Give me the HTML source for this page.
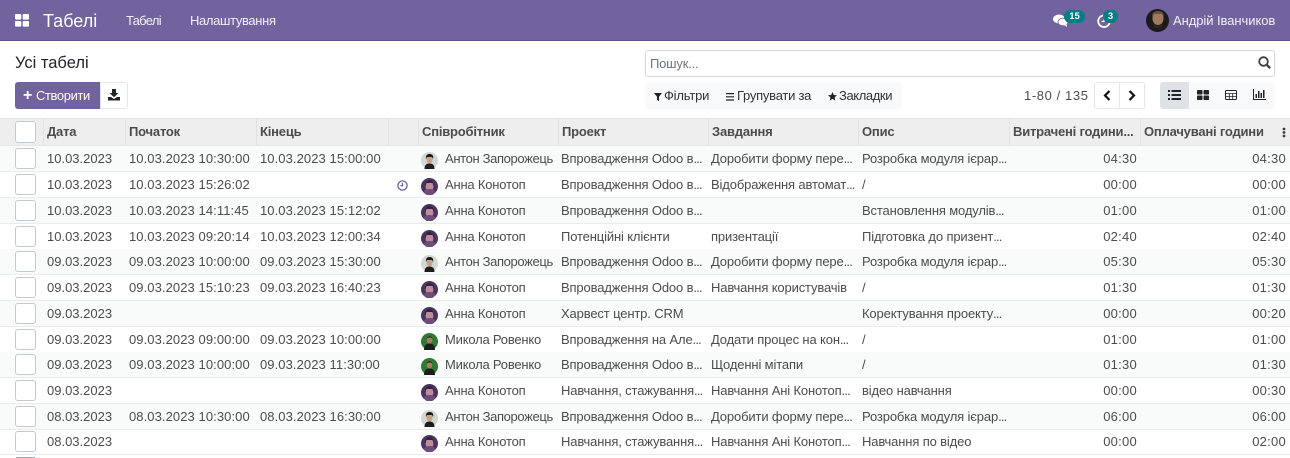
<!DOCTYPE html>
<html lang="uk"><head><meta charset="utf-8"><title>Табелі</title>
<style>
html,body{margin:0;padding:0;background:#fff}
html{width:1290px;height:458px;overflow:hidden}
body{width:1290px;height:458px;position:relative;overflow:hidden;font-family:"Liberation Sans",sans-serif;font-size:13px;color:#4c4c4c}
.a{position:absolute;white-space:nowrap}
#nav{position:absolute;left:0;top:0;width:1290px;height:40px;background:#71639e;border-bottom:1.5px solid #5f5389;color:#fff}
.btn{position:absolute;box-sizing:border-box;border:1px solid #e4e7ea;background:#fff}
.th{position:absolute;top:119px;height:26px;box-sizing:border-box;line-height:26px;font-weight:bold;color:#4c4c4c;white-space:nowrap;padding-left:3px;border-left:1px solid #e2e2e2;letter-spacing:-.2px}
.r{position:absolute;left:0;width:1290px;height:26px;box-sizing:border-box;border-bottom:1px solid #e9ecef;line-height:25px}
.r.s{background:#f9fafa}
.r span{position:absolute;top:0;white-space:nowrap}
.r i{position:absolute;left:15px;top:2px;width:21px;height:21px;box-sizing:border-box;border:1px solid #c4c9ce;border-radius:3px;background:#fff}
.r svg{position:absolute;left:421px;top:6px}
.r u{text-decoration:none;letter-spacing:-.8px}
.d{left:47px}
.r .b{left:129px;letter-spacing:.08px}
.r .e{left:260px;letter-spacing:.08px}
.r .n{left:445px;letter-spacing:-.2px}
.r .z{letter-spacing:-.35px}
.r .p{left:561px;letter-spacing:-.14px}
.r .t{left:711px;letter-spacing:-.14px}
.r .o{left:862px;letter-spacing:-.14px}
.r .h1{right:153px;letter-spacing:.25px}
.r .h2{right:4px;letter-spacing:.25px}
</style></head><body>
<svg width="0" height="0" style="position:absolute">
<symbol id="an" viewBox="0 0 17 17"><circle cx="8.5" cy="8.5" r="8.5" fill="#4a3560"/><ellipse cx="8.5" cy="8" rx="4" ry="5.5" fill="#c08c9c"/><path d="M2.500 14c1-2 3-3 6-3s5 1 6 3l-3 3H5.500z" fill="#6d4e78"/><path d="M4 10C3.500 4 6 2 8.500 2S13.500 4 13 10L11.500 5H5.500z" fill="#33243f"/></symbol>
<symbol id="ant" viewBox="0 0 17 17"><circle cx="8.500" cy="8.500" r="8.500" fill="#d4d6d3"/><ellipse cx="8.500" cy="7.500" rx="3" ry="4" fill="#c9a28c"/><path d="M5 7C4.500 3 6.500 2 8.500 2s4.500 1 3.500 5L11 5H6z" fill="#1e1a19"/><path d="M3.500 17c0-4 2-5.500 5-5.500s5 1.500 5 5.500z" fill="#1d1d1f"/></symbol>
<symbol id="mk" viewBox="0 0 17 17"><circle cx="8.500" cy="8.500" r="8.500" fill="#2f7a35"/><ellipse cx="8.500" cy="7" rx="2.800" ry="3.500" fill="#a97f62"/><path d="M5.500 6C6 2.500 11 2.500 11.500 6L10 4.500H7z" fill="#1d1c14"/><path d="M3 17c0-5 2.500-6.500 5.500-6.500S14 12 14 17z" fill="#1a1f1a"/></symbol>
</svg>
<div id="nav">
<svg class="a" style="left:15px;top:14px" width="14" height="13"><rect width="6.300" height="5.600" rx="1" fill="#fff"/><rect x="7.700" width="6.300" height="5.600" rx="1" fill="#fff"/><rect y="7" width="6.300" height="5.600" rx="1" fill="#fff"/><rect x="7.700" y="7" width="6.300" height="5.600" rx="1" fill="#fff"/></svg>
<div class="a" style="left:43px;top:10px;font-size:18px;line-height:22px">Табелі</div>
<div class="a" style="left:126px;top:13px;line-height:16px;color:#f2f0f6;letter-spacing:-.7px">Табелі</div>
<div class="a" style="left:190px;top:13px;line-height:16px;color:#f2f0f6;letter-spacing:-.35px">Налаштування</div>
<svg class="a" style="left:1053px;top:13px" width="16" height="15"><ellipse cx="6" cy="6" rx="6" ry="4.500" fill="#fff"/><ellipse cx="10" cy="9" rx="5" ry="3.800" fill="#fff" stroke="#71639e" stroke-width=".8"/><path d="M11 12l3 2-.5-3z" fill="#fff"/></svg>
<div class="a" style="left:1064px;top:10px;width:21px;height:13px;border-radius:7px;background:#017e84;color:#fff;font-size:9.500px;font-weight:bold;line-height:13px;text-align:center">15</div>
<svg class="a" style="left:1097px;top:14px" width="14" height="14" fill="none" stroke="#fff" stroke-width="1.800"><path d="M9.500 2A5.800 5.800 0 1 0 12.800 7"/><path d="M7 4v3.500H4.500" stroke-width="1.300"/></svg>
<div class="a" style="left:1103px;top:10px;width:15px;height:13px;border-radius:7px;background:#017e84;color:#fff;font-size:9.500px;font-weight:bold;line-height:13px;text-align:center">3</div>
<svg class="a" style="left:1146px;top:9px" width="23" height="23"><circle cx="11.500" cy="11.500" r="11.500" fill="#1c1a1d"/><ellipse cx="12" cy="9.500" rx="5.500" ry="6.500" fill="#a07a5f"/><path d="M6 8c0-5 3-6 6-6s6 1 6 6l-2-3H8z" fill="#6a5040"/><path d="M7 13c2 5 8 5 10 0l-1 6H8z" fill="#2e2522"/></svg>
<div class="a" style="left:1173px;top:13px;line-height:16px;color:#f2f0f6;letter-spacing:-.06px">Андрій Іванчиков</div>
</div>

<div class="a" style="left:15px;top:53px;font-size:16.500px;line-height:20px;color:#212529">Усі табелі</div>
<div class="a" style="left:645px;top:50px;width:630px;height:27px;box-sizing:border-box;border:1px solid #d5d9dd;border-radius:3px"></div>
<div class="a" style="left:650px;top:56px;line-height:16px;color:#6f757a;letter-spacing:-.2px">Пошук...</div>
<svg class="a" style="left:1258px;top:56px" width="13" height="13" fill="none" stroke="#3c4043" stroke-width="1.800"><circle cx="5.500" cy="5.500" r="4.300"/><path d="M8.700 8.700l3.500 3.500" stroke-width="2.200"/></svg>

<div class="a" style="left:15px;top:82px;width:85px;height:27px;background:#71639e;border-radius:3px 0 0 3px;color:#fff;line-height:27px"><span class="a" style="left:8px;font-weight:bold;font-size:16px">+</span><span class="a" style="left:21px;letter-spacing:-.4px">Створити</span></div>
<div class="btn" style="left:100px;top:82px;width:28px;height:27px;border-radius:0 3px 3px 0"></div>
<svg class="a" style="left:108px;top:89px" width="12" height="12" fill="#212529"><path d="M4 0h4v4h2.500L6 8.300 1.500 4H4z"/><path d="M0 8h3l3 2 3-2h3v3.500H0z"/></svg>

<div class="a" style="left:645px;top:82px;width:257px;height:27px;background:#f8f9fa;border-radius:3px"></div>
<svg class="a" style="left:654px;top:93px" width="8" height="8" fill="#212529"><path d="M0 0h8L5 3.800V8L3 7V3.800z"/></svg>
<div class="a" style="left:664px;top:87px;line-height:17px;color:#2f3338;letter-spacing:-.2px">Фільтри</div>
<svg class="a" style="left:726px;top:93px" width="8" height="8" fill="#212529"><path d="M0 0h8v1.200H0zM0 3.200h8v1.200H0zM0 6.400h8v1.200H0z"/></svg>
<div class="a" style="left:737px;top:87px;line-height:17px;color:#2f3338;letter-spacing:-.25px">Групувати за</div>
<svg class="a" style="left:828px;top:92px" width="9" height="9" fill="#212529"><path d="M4.500 0l1.300 3 3.200.300-2.400 2.100.7 3.200-2.800-1.700-2.800 1.700.7-3.200L0 3.300 3.200 3z"/></svg>
<div class="a" style="left:839px;top:87px;line-height:17px;color:#2f3338;letter-spacing:-.4px">Закладки</div>

<div class="a" style="left:1024px;top:87px;line-height:17px;letter-spacing:.6px;color:#4c4c4c">1-80 / 135</div>
<div class="btn" style="left:1094px;top:82px;width:26px;height:27px;border-radius:3px 0 0 3px"></div>
<div class="btn" style="left:1119px;top:82px;width:26px;height:27px;border-radius:0 3px 3px 0"></div>
<svg class="a" style="left:1103px;top:90px" width="8" height="11" fill="none" stroke="#111" stroke-width="2.200"><path d="M6.500 1L2 5.500 6.500 10"/></svg>
<svg class="a" style="left:1128px;top:90px" width="8" height="11" fill="none" stroke="#111" stroke-width="2.200"><path d="M1.500 1L6 5.500 1.500 10"/></svg>
<div class="a" style="left:1160px;top:82px;width:115px;height:27px;background:#f8f9fa;border-radius:3px"></div>
<div class="a" style="left:1160px;top:82px;width:29px;height:27px;background:#dee2e6;border-radius:3px 0 0 3px"></div>
<svg class="a" style="left:1168px;top:90px" width="13" height="10" fill="#212529"><path d="M0 0h2v2H0zM3.500 0H13v2H3.500zM0 4h2v2H0zM3.500 4H13v2H3.500zM0 8h2v2H0zM3.500 8H13v2H3.500z"/></svg>
<svg class="a" style="left:1197px;top:90px" width="12" height="10" fill="#212529"><rect width="5.500" height="4.500" rx=".8"/><rect x="6.500" width="5.500" height="4.500" rx=".8"/><rect y="5.500" width="5.500" height="4.500" rx=".8"/><rect x="6.500" y="5.500" width="5.500" height="4.500" rx=".8"/></svg>
<svg class="a" style="left:1225px;top:90px" width="12" height="10" fill="none" stroke="#212529"><rect x=".5" y=".5" width="11" height="9" rx="1"/><path d="M.5 3.500h11M.5 6.500h11M4.300 3.500v6M7.700 3.500v6" stroke-width=".8"/></svg>
<svg class="a" style="left:1253px;top:89px" width="13" height="11" fill="#212529"><path d="M0 0h1v10h12v1H0z"/><rect x="2.500" y="5" width="1.500" height="4"/><rect x="5" y="2" width="1.500" height="7"/><rect x="7.500" y="4" width="1.500" height="5"/><rect x="10" y="1" width="1.500" height="8"/></svg>

<div class="a" style="left:0;top:118px;width:1290px;height:28px;box-sizing:border-box;background:#eeeeee;border-top:1px solid #e2e5e8;border-bottom:1px solid #e6e8ea"></div>
<div class="a" style="left:15px;top:121px;width:21px;height:22px;box-sizing:border-box;border:1px solid #c4c9ce;border-radius:3px;background:#fff"></div>
<div class="th" style="left:43px">Дата</div>
<div class="th" style="left:125px">Початок</div>
<div class="th" style="left:256px">Кінець</div>
<div class="th" style="left:388px">&nbsp;</div>
<div class="th" style="left:418px">Співробітник</div>
<div class="th" style="left:558px">Проект</div>
<div class="th" style="left:708px">Завдання</div>
<div class="th" style="left:858px">Опис</div>
<div class="th" style="left:1009px">Витрачені години...</div>
<div class="th" style="left:1140px">Оплачувані години</div>
<svg class="a" style="left:1282px;top:127px" width="4" height="11" fill="#3c4043"><circle cx="2" cy="2" r="1.400"/><circle cx="2" cy="5.500" r="1.400"/><circle cx="2" cy="9" r="1.400"/></svg>

<div class="r s" style="top:146px"><i></i><span class="d">10.03.2023</span><span class="b">10.03.2023 10:30:00</span><span class="e">10.03.2023 15:00:00</span><svg width="17" height="17"><use href="#ant"/></svg><span class="n z">Антон Запорожець</span><span class="p">Впровадження Odoo в<u>...</u></span><span class="t">Доробити форму пере<u>...</u></span><span class="o">Розробка модуля ієрар<u>...</u></span><span class="h1">04:30</span><span class="h2">04:30</span></div>
<div class="r" style="top:172px"><i></i><span class="d">10.03.2023</span><span class="b">10.03.2023 15:26:02</span><svg style="left:397px;top:8px" width="11" height="11" fill="none" stroke="#71639e" stroke-width="1.300"><circle cx="5.500" cy="5.500" r="4.600"/><path d="M5.500 2.800v2.900H3.500"/></svg><svg width="17" height="17"><use href="#an"/></svg><span class="n">Анна Конотоп</span><span class="p">Впровадження Odoo в<u>...</u></span><span class="t">Відображення автомат<u>...</u></span><span class="o">/</span><span class="h1">00:00</span><span class="h2">00:00</span></div>
<div class="r s" style="top:198px"><i></i><span class="d">10.03.2023</span><span class="b">10.03.2023 14:11:45</span><span class="e">10.03.2023 15:12:02</span><svg width="17" height="17"><use href="#an"/></svg><span class="n">Анна Конотоп</span><span class="p">Впровадження Odoo в<u>...</u></span><span class="o">Встановлення модулів<u>...</u></span><span class="h1">01:00</span><span class="h2">01:00</span></div>
<div class="r" style="top:224px"><i></i><span class="d">10.03.2023</span><span class="b">10.03.2023 09:20:14</span><span class="e">10.03.2023 12:00:34</span><svg width="17" height="17"><use href="#an"/></svg><span class="n">Анна Конотоп</span><span class="p">Потенційні клієнти</span><span class="t">призентації</span><span class="o">Підготовка до призент<u>...</u></span><span class="h1">02:40</span><span class="h2">02:40</span></div>
<div class="r s" style="top:249px"><i></i><span class="d">09.03.2023</span><span class="b">09.03.2023 10:00:00</span><span class="e">09.03.2023 15:30:00</span><svg width="17" height="17"><use href="#ant"/></svg><span class="n z">Антон Запорожець</span><span class="p">Впровадження Odoo в<u>...</u></span><span class="t">Доробити форму пере<u>...</u></span><span class="o">Розробка модуля ієрар<u>...</u></span><span class="h1">05:30</span><span class="h2">05:30</span></div>
<div class="r" style="top:275px"><i></i><span class="d">09.03.2023</span><span class="b">09.03.2023 15:10:23</span><span class="e">09.03.2023 16:40:23</span><svg width="17" height="17"><use href="#an"/></svg><span class="n">Анна Конотоп</span><span class="p">Впровадження Odoo в<u>...</u></span><span class="t">Навчання користувачів</span><span class="o">/</span><span class="h1">01:30</span><span class="h2">01:30</span></div>
<div class="r s" style="top:301px"><i></i><span class="d">09.03.2023</span><svg width="17" height="17"><use href="#an"/></svg><span class="n">Анна Конотоп</span><span class="p">Харвест центр. CRM</span><span class="o">Коректування проекту<u>...</u></span><span class="h1">00:00</span><span class="h2">00:20</span></div>
<div class="r" style="top:327px"><i></i><span class="d">09.03.2023</span><span class="b">09.03.2023 09:00:00</span><span class="e">09.03.2023 10:00:00</span><svg width="17" height="17"><use href="#mk"/></svg><span class="n">Микола Ровенко</span><span class="p">Впровадження на Але<u>...</u></span><span class="t">Додати процес на кон<u>...</u></span><span class="o">/</span><span class="h1">01:00</span><span class="h2">01:00</span></div>
<div class="r s" style="top:352px"><i></i><span class="d">09.03.2023</span><span class="b">09.03.2023 10:00:00</span><span class="e">09.03.2023 11:30:00</span><svg width="17" height="17"><use href="#mk"/></svg><span class="n">Микола Ровенко</span><span class="p">Впровадження Odoo в<u>...</u></span><span class="t">Щоденні мітапи</span><span class="o">/</span><span class="h1">01:30</span><span class="h2">01:30</span></div>
<div class="r" style="top:378px"><i></i><span class="d">09.03.2023</span><svg width="17" height="17"><use href="#an"/></svg><span class="n">Анна Конотоп</span><span class="p">Навчання, стажування<u>...</u></span><span class="t">Навчання Ані Конотоп<u>...</u></span><span class="o">відео навчання</span><span class="h1">00:00</span><span class="h2">00:30</span></div>
<div class="r s" style="top:404px"><i></i><span class="d">08.03.2023</span><span class="b">08.03.2023 10:30:00</span><span class="e">08.03.2023 16:30:00</span><svg width="17" height="17"><use href="#ant"/></svg><span class="n z">Антон Запорожець</span><span class="p">Впровадження Odoo в<u>...</u></span><span class="t">Доробити форму пере<u>...</u></span><span class="o">Розробка модуля ієрар<u>...</u></span><span class="h1">06:00</span><span class="h2">06:00</span></div>
<div class="r" style="top:429px"><i></i><span class="d">08.03.2023</span><svg width="17" height="17"><use href="#an"/></svg><span class="n">Анна Конотоп</span><span class="p">Навчання, стажування<u>...</u></span><span class="t">Навчання Ані Конотоп<u>...</u></span><span class="o">Навчання по відео</span><span class="h1">00:00</span><span class="h2">02:00</span></div>
<div class="a" style="left:16px;top:457px;width:19px;height:1px;background:#a9aeb3"></div>
</body></html>
